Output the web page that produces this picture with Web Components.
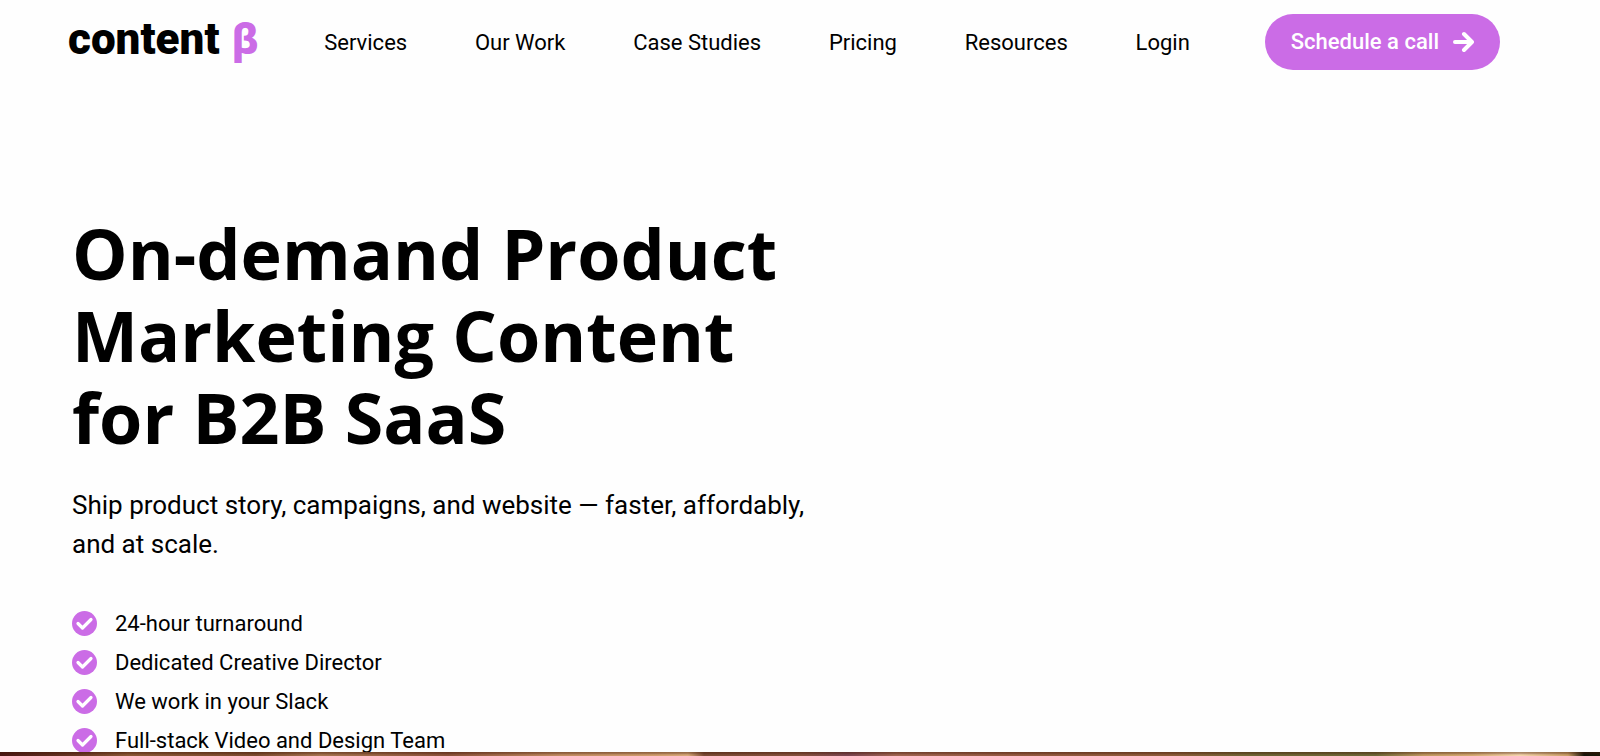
<!DOCTYPE html>
<html lang="en">
<head>
<meta charset="utf-8">
<meta name="viewport" content="width=device-width, initial-scale=1">
<title>Content Beta</title>
<style>
    body {
        margin: 0;
        background: #fefefe;
        color: #000;
        font-family: Roboto, sans-serif;
        font-size: 22px;
    }
</style>
</head>
<body>
<landing-page>
    <site-header slot="header">
        <nav-link href="#services">Services</nav-link>
        <nav-link href="#work">Our Work</nav-link>
        <nav-link href="#cases">Case Studies</nav-link>
        <nav-link href="#pricing">Pricing</nav-link>
        <nav-link href="#resources">Resources</nav-link>
        <nav-link href="#login">Login</nav-link>
        <call-button slot="action">Schedule a call</call-button>
    </site-header>
    <hero-section>
        <span slot="title">On-demand Product<br>Marketing Content<br>for B2B SaaS</span>
        <span slot="lead">Ship product story, campaigns, and website — faster, affordably, and at scale.</span>
        <check-item>24-hour turnaround</check-item>
        <check-item>Dedicated Creative Director</check-item>
        <check-item>We work in your Slack</check-item>
        <check-item>Full-stack Video and Design Team</check-item>
    </hero-section>
    <photo-strip slot="footer"></photo-strip>
</landing-page>

<script>
class LandingPage extends HTMLElement {
    constructor() {
        super();
        this.attachShadow({ mode: 'open' });
        this.shadowRoot.innerHTML = `
            <style>
                :host {
                    display: grid;
                    grid-template-rows: auto minmax(0, 1fr) auto;
                    height: 100vh;
                }
                main {
                    overflow: hidden;
                }
            </style>
            <slot name="header"></slot>
            <main><slot></slot></main>
            <slot name="footer"></slot>
        `;
    }
}

class SiteHeader extends HTMLElement {
    constructor() {
        super();
        this.attachShadow({ mode: 'open' });
        this.shadowRoot.innerHTML = `
            <style>
                :host {
                    display: block;
                }
                header {
                    display: flex;
                    align-items: center;
                    padding: 14px 100px 14px 68px;
                }
                .logo {
                    display: flex;
                    gap: 12px;
                    color: #000;
                    font-size: 44px;
                    font-weight: 900;
                    line-height: 50px;
                    padding-bottom: 6px;
                    text-decoration: none;
                }
                .beta {
                    color: #cb6ce6;
                }
                nav {
                    flex: 1;
                    display: flex;
                    justify-content: space-between;
                    padding: 2px 75px 0 66px;
                }
            </style>
            <header>
                <a class="logo" href="#home"><span>content</span><span class="beta">β</span></a>
                <nav><slot></slot></nav>
                <slot name="action"></slot>
            </header>
        `;
    }
}

class NavLink extends HTMLElement {
    constructor() {
        super();
        this.attachShadow({ mode: 'open' });
    }

    connectedCallback() {
        this.shadowRoot.innerHTML = `
            <style>
                :host {
                    display: block;
                }
                a {
                    color: inherit;
                    line-height: 28px;
                    text-decoration: none;
                    white-space: nowrap;
                }
            </style>
            <a href="${this.getAttribute('href')}"><slot></slot></a>
        `;
    }
}

class CallButton extends HTMLElement {
    constructor() {
        super();
        this.attachShadow({ mode: 'open' });
        this.shadowRoot.innerHTML = `
            <style>
                :host {
                    display: block;
                }
                button {
                    display: flex;
                    align-items: center;
                    gap: 13px;
                    height: 56px;
                    padding: 0 26px;
                    border: none;
                    border-radius: 28px;
                    background: #cb6ce6;
                    color: #fff;
                    font: 500 22px/28px Roboto, sans-serif;
                    white-space: nowrap;
                    cursor: pointer;
                }
            </style>
            <button type="button">
                <slot></slot>
                <svg width="22" height="22" viewBox="0 0 22 22" fill="none" stroke="#fff" stroke-width="4" stroke-linecap="round" stroke-linejoin="round" aria-hidden="true">
                    <path d="M3 11H19M12 3L20 11L12 19"/>
                </svg>
            </button>
        `;
    }
}

class HeroSection extends HTMLElement {
    constructor() {
        super();
        this.attachShadow({ mode: 'open' });
        this.shadowRoot.innerHTML = `
            <style>
                :host {
                    display: block;
                    padding: 128px 72px 0;
                }
                section {
                    max-width: 760px;
                }
                h1 {
                    margin: 0 0 28px;
                    font: 700 70px/82px "Open Sans", sans-serif;
                    white-space: nowrap;
                }
                p {
                    margin: 0 0 40px;
                    font-size: 26px;
                    line-height: 39px;
                }
                ul {
                    margin: 0;
                    padding: 0;
                }
            </style>
            <section>
                <h1><slot name="title"></slot></h1>
                <p><slot name="lead"></slot></p>
                <ul role="list"><slot></slot></ul>
            </section>
        `;
    }
}

class CheckItem extends HTMLElement {
    constructor() {
        super();
        this.attachShadow({ mode: 'open' });
        this.shadowRoot.innerHTML = `
            <style>
                :host {
                    display: flex;
                    align-items: center;
                    gap: 18px;
                    line-height: 39px;
                }
            </style>
            <svg width="25" height="25" viewBox="0 0 25 25" fill="none" aria-hidden="true">
                <circle cx="12.5" cy="12.5" r="12.5" fill="#cb6ce6"/>
                <path d="M6 12.5L10.5 17L19 8.5" stroke="#fff" stroke-width="3.2" stroke-linecap="round" stroke-linejoin="round"/>
            </svg>
            <slot></slot>
        `;
    }

    connectedCallback() {
        this.setAttribute('role', 'listitem');
    }
}

// Top edge of the photo band that follows the hero
class PhotoStrip extends HTMLElement {
    constructor() {
        super();
        this.attachShadow({ mode: 'open' });
        this.shadowRoot.innerHTML = `
            <style>
                :host {
                    display: block;
                    height: 4px;
                    background:
                        linear-gradient(rgba(60, 20, 0, 0.4) 1px, transparent 3px),
                        linear-gradient(90deg, #4a1614 0%, #6a3824 5%, #8a5836 8%, #7c4a2e 16%, #a67450 20%, #8a5038 28%, #c08a60 35%, #cf9c6c 41%, #d8a878 43%, #7a4a34 44%, #84503c 50%, #7a4450 53%, #a06450 56%, #945840 63%, #8c5a38 73%, #6e6434 78%, #6c6636 86%, #c09860 89%, #d4a870 92%, #f4d4ac 95%, #c89c64 98%, #17150a 99%, #1a1a08 100%);
                }
            </style>
        `;
    }
}

customElements.define('landing-page', LandingPage);
customElements.define('site-header', SiteHeader);
customElements.define('nav-link', NavLink);
customElements.define('call-button', CallButton);
customElements.define('hero-section', HeroSection);
customElements.define('check-item', CheckItem);
customElements.define('photo-strip', PhotoStrip);
</script>
</body>
</html>
